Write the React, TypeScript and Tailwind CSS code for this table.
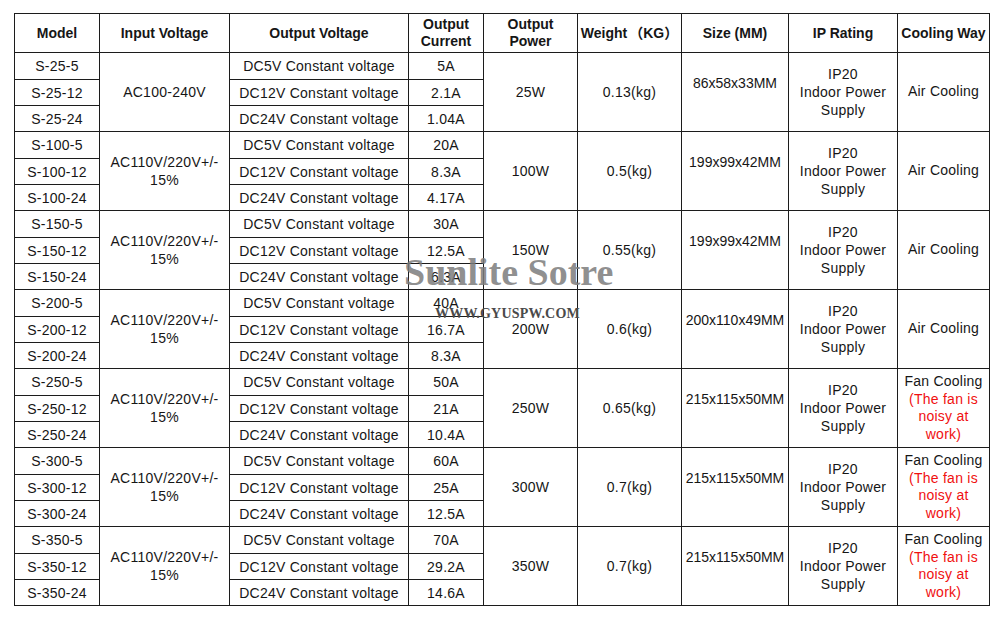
const groups = [
  {
    n: "25",
    input: ["AC100-240V"],
    current: ["5A", "2.1A", "1.04A"],
    power: "25W",
    weight: "0.13(kg)",
    size: "86x58x33MM",
    fan: false,
  },
  {
    n: "100",
    input: ["AC110V/220V+/-", "15%"],
    current: ["20A", "8.3A", "4.17A"],
    power: "100W",
    weight: "0.5(kg)",
    size: "199x99x42MM",
    fan: false,
  },
  {
    n: "150",
    input: ["AC110V/220V+/-", "15%"],
    current: ["30A", "12.5A", "6.3A"],
    power: "150W",
    weight: "0.55(kg)",
    size: "199x99x42MM",
    fan: false,
  },
  {
    n: "200",
    input: ["AC110V/220V+/-", "15%"],
    current: ["40A", "16.7A", "8.3A"],
    power: "200W",
    weight: "0.6(kg)",
    size: "200x110x49MM",
    fan: false,
  },
  {
    n: "250",
    input: ["AC110V/220V+/-", "15%"],
    current: ["50A", "21A", "10.4A"],
    power: "250W",
    weight: "0.65(kg)",
    size: "215x115x50MM",
    fan: true,
  },
  {
    n: "300",
    input: ["AC110V/220V+/-", "15%"],
    current: ["60A", "25A", "12.5A"],
    power: "300W",
    weight: "0.7(kg)",
    size: "215x115x50MM",
    fan: true,
  },
  {
    n: "350",
    input: ["AC110V/220V+/-", "15%"],
    current: ["70A", "29.2A", "14.6A"],
    power: "350W",
    weight: "0.7(kg)",
    size: "215x115x50MM",
    fan: true,
  },
];

const volts = ["5", "12", "24"];

const cell = "border border-[#1c1c1c] text-center align-middle p-0";

export default function App() {
  return (
    <div
      className="relative w-[1000px] h-[617px] bg-white text-[#161616] overflow-hidden"
      style={{ fontFamily: '"Liberation Sans", Arial, "Noto Sans CJK SC", sans-serif' }}
    >
      <div className="pt-[13px] pl-[14px]">
        <table className="table-fixed border-collapse w-[975px] text-[14px] tracking-[0.25px] leading-[18px]">
          <colgroup>
            <col className="w-[85px]" />
            <col className="w-[130px]" />
            <col className="w-[179px]" />
            <col className="w-[75px]" />
            <col className="w-[94px]" />
            <col className="w-[104px]" />
            <col className="w-[107px]" />
            <col className="w-[109px]" />
            <col className="w-[92px]" />
          </colgroup>
          <thead>
            <tr className="h-[39px] font-bold leading-[17px] tracking-normal">
              <th className={cell}>Model</th>
              <th className={cell}>Input Voltage</th>
              <th className={cell}>Output Voltage</th>
              <th className={cell}>
                Output
                <br />
                Current
              </th>
              <th className={cell}>
                Output
                <br />
                Power
              </th>
              <th className={`${cell} whitespace-nowrap`}>
                Weight<span className="ml-[2px]">（KG）</span>
              </th>
              <th className={cell}>Size (MM)</th>
              <th className={cell}>IP Rating</th>
              <th className={`${cell} whitespace-nowrap`}>Cooling Way</th>
            </tr>
          </thead>
          <tbody>
            {groups.map((g) =>
              volts.map((v, i) => (
                <tr key={g.n + v} className={i === 0 ? "h-[27px]" : "h-[26px]"}>
                  <td className={cell}>
                    S-{g.n}-{v}
                  </td>
                  {i === 0 && (
                    <td className={cell} rowSpan={3}>
                      {g.input.map((l) => (
                        <div key={l}>{l}</div>
                      ))}
                    </td>
                  )}
                  <td className={cell}>DC{v}V Constant voltage</td>
                  <td className={cell}>{g.current[i]}</td>
                  {i === 0 && (
                    <>
                      <td className={cell} rowSpan={3}>
                        {g.power}
                      </td>
                      <td className={cell} rowSpan={3}>
                        {g.weight}
                      </td>
                      <td className={`${cell} whitespace-nowrap tracking-normal`} rowSpan={3}>
                        <div className="pb-[18px]">{g.size}</div>
                      </td>
                      <td className={cell} rowSpan={3}>
                        <div>IP20</div>
                        <div>Indoor Power</div>
                        <div>Supply</div>
                      </td>
                      <td className={`${cell} leading-[17.5px]`} rowSpan={3}>
                        {g.fan ? (
                          <>
                            <div>Fan Cooling</div>
                            <div className="text-[#f01010]">
                              (The fan is
                              <br />
                              noisy at
                              <br />
                              work)
                            </div>
                          </>
                        ) : (
                          "Air Cooling"
                        )}
                      </td>
                    </>
                  )}
                </tr>
              ))
            )}
          </tbody>
        </table>
      </div>

      <div
        className="absolute left-[404px] top-[250px] text-[38px] leading-[44px] font-bold text-[#7c7c7c]/85 tracking-normal"
        style={{ fontFamily: '"Liberation Serif", "Times New Roman", serif' }}
      >
        Sunlite Sotre
      </div>
      <div
        className="absolute left-[435px] top-[306px] text-[14px] leading-[16px] font-bold text-[#4a4a4a] tracking-[0.2px]"
        style={{ fontFamily: '"Liberation Serif", "Times New Roman", serif' }}
      >
        WWW.GYUSPW.COM
      </div>
    </div>
  );
}
